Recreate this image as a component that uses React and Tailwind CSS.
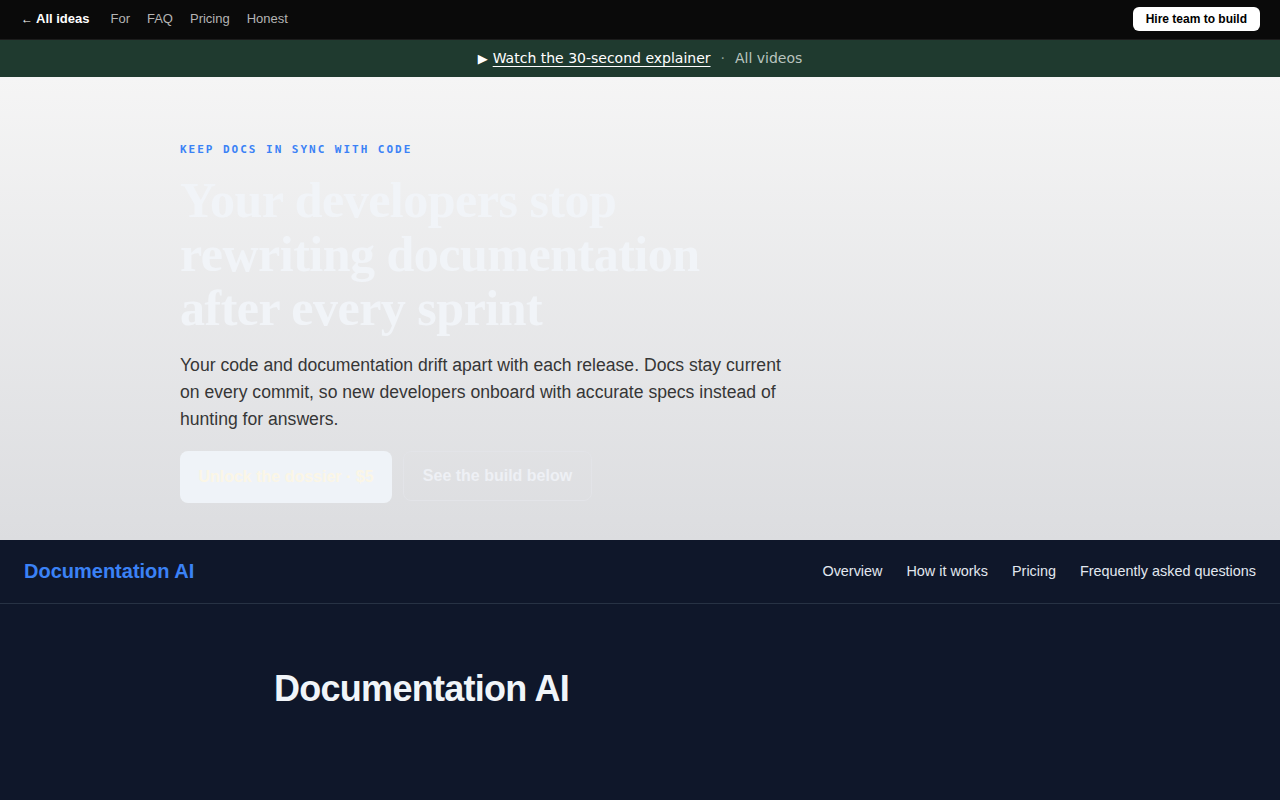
export default function App() {
  const topLinks = ['For', 'FAQ', 'Pricing', 'Honest']
  const navLinks = ['Overview', 'How it works', 'Pricing', 'Frequently asked questions']

  return (
    <div className="min-h-screen bg-[#0f172a] font-['Liberation_Sans',Arial,sans-serif]">
      {/* Top bar */}
      <div className="h-10 bg-[#0a0a0a] border-b border-[#1c1c1c] flex items-center justify-between pl-[21px] pr-5">
        <div className="flex items-center gap-[17px] text-[13px] -mt-[2px]">
          <span className="text-white font-bold mr-[4px]">
            <span className="text-[12px] mr-[3px]">←</span>All ideas
          </span>
          {topLinks.map(l => (
            <span key={l} className="text-[#b4b4b4]">{l}</span>
          ))}
        </div>
        <button className="bg-white text-black font-bold text-[12px] px-[13px] h-6 rounded-md -mt-[2px]">
          Hire team to build
        </button>
      </div>

      {/* Explainer banner */}
      <div className="h-[37px] bg-[#1f3a2f] flex items-center justify-center gap-[10px] text-[14px] font-['DejaVu_Sans',sans-serif]">
        <span className="text-white">
          <span className="text-[13px] mr-[5px]">▶</span>
          <span className="underline underline-offset-[3px]">Watch the 30-second explainer</span>
        </span>
        <span className="text-[#8fa39a]">·</span>
        <span className="text-[#b9c4bf]">All videos</span>
      </div>

      {/* Hero */}
      <div className="h-[463px] bg-gradient-to-b from-[#f5f5f5] to-[#dcdde0]">
        <div className="w-[920px] mx-auto pt-[65px]">
          <p className="font-['DejaVu_Sans_Mono',monospace] font-bold text-[11px] tracking-[0.18em] text-[#3b82f6]">
            KEEP DOCS IN SYNC WITH CODE
          </p>
          <h1 className="mt-[14px] font-['Liberation_Serif','Times_New_Roman',serif] font-bold text-[50px] leading-[54px] tracking-[-0.01em] text-[#f1f4f8] max-w-[560px]">
            Your developers stop rewriting documentation after every sprint
          </h1>
          <p className="mt-[17px] text-[17.6px] leading-[27px] text-[#363636] max-w-[610px]">
            Your code and documentation drift apart with each release. Docs stay current on every commit, so new developers onboard with accurate specs instead of hunting for answers.
          </p>
          <div className="mt-[18px] flex gap-[11px]">
            <button className="h-[52px] w-[212px] rounded-lg bg-[#eff3f8] text-[#fbf6e6] font-bold text-[16px]">
              Unlock the dossier · $5
            </button>
            <button className="h-[50px] w-[189px] rounded-lg border border-[#e3e4e8] text-[#eef0f5] font-bold text-[16px]">
              See the build below
            </button>
          </div>
        </div>
      </div>

      {/* Product nav */}
      <div className="h-[64px] bg-[#0f172a] border-b border-[#273244] flex items-center justify-between px-6">
        <span className="text-[#3b82f6] font-bold text-[20px] -mt-[2px]">Documentation AI</span>
        <nav className="flex gap-6 text-[14.4px] text-[#e2e8f0]">
          {navLinks.map(l => (
            <span key={l}>{l}</span>
          ))}
        </nav>
      </div>

      {/* Product hero */}
      <div className="h-[196px] bg-[#0f172a]">
        <div className="w-[732px] mx-auto pt-[58px]">
          <h2 className="text-[36px] font-bold tracking-[-0.02em] text-[#f1f5f9]">Documentation AI</h2>
        </div>
      </div>
    </div>
  )
}
